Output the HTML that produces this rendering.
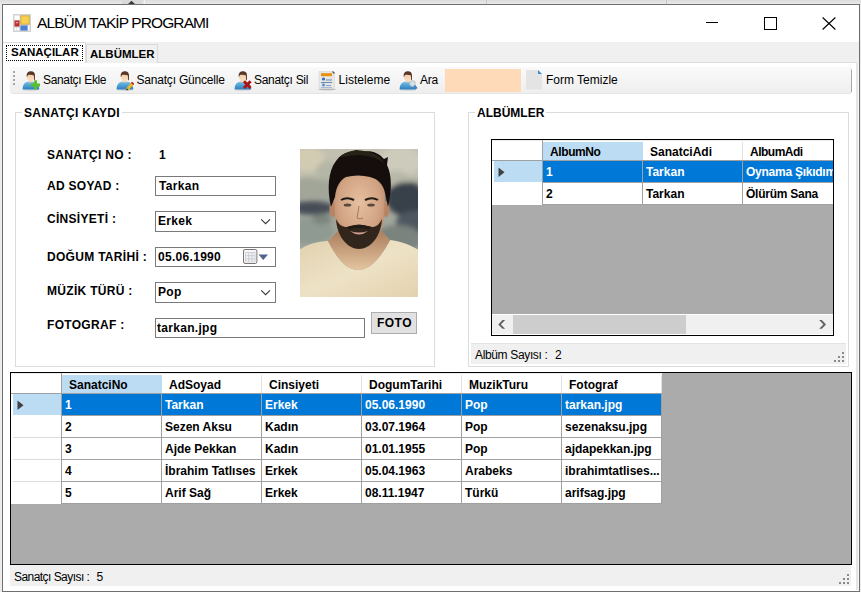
<!DOCTYPE html>
<html><head><meta charset="utf-8">
<style>
*{margin:0;padding:0;box-sizing:border-box}
html,body{width:861px;height:592px;overflow:hidden;background:#ececec;font-family:"Liberation Sans",sans-serif;color:#000}
.a{position:absolute}
#topbg{left:0;top:0;width:861px;height:4px;background:linear-gradient(#dcdcdc,#e9e9e9)}
#win{left:2px;top:4px;width:858px;height:588px;border:1px solid #6f6f6f;background:#fff}
.t{position:absolute;white-space:nowrap;line-height:1}
.b{font-weight:bold}
.tb{position:absolute;background:#fff;border:1px solid #7a7a7a}
.gb{position:absolute;border:1px solid #dcdcdc}
.gbt{position:absolute;background:#fff;padding:0 2px;font-weight:bold;font-size:12px;line-height:1;white-space:nowrap}
.lbl{position:absolute;font-weight:bold;font-size:12px;line-height:1;white-space:nowrap;letter-spacing:0.3px}
.grid{position:absolute;background:#ababab;border:1px solid #000;overflow:hidden}
.row{position:absolute;left:0;height:22px}
.c{position:absolute;top:0;height:22px;border-right:1px solid #a0a0a0;border-bottom:1px solid #a0a0a0;background:#fff;font-weight:bold;font-size:12px;line-height:23px;padding-left:3px;white-space:nowrap;overflow:hidden}
.sel{background:#0078d7;color:#fff}
.hsel{background:#bcdcf4}
.tbt{font-size:12px;letter-spacing:-0.2px;color:#000}
.sst{font-size:12px;letter-spacing:-0.3px;color:#000}
.hc{position:absolute;top:0;height:22px;font-weight:bold;font-size:12px;line-height:22px;padding-top:1px;padding-left:7px;white-space:nowrap;overflow:hidden}
.ss{position:absolute;background:#f0f0f0;font-size:12px;line-height:1}
</style></head><body>
<div class="a" id="topbg"></div>
<div class="a" style="left:122px;top:0;width:20px;height:4px;background:#d9d9d9"></div>
<svg class="a" style="left:127px;top:0" width="9" height="5"><path d="M0.5 4.5L4.5 0.8L8.5 4.5Z" fill="#3a3a3a"/></svg>
<div class="a" style="left:144px;top:0;width:1px;height:4px;background:#f4f4f4"></div>
<div class="a" style="left:486px;top:0;width:1px;height:4px;background:#c8c8c8"></div>
<div class="a" style="left:666px;top:0;width:1px;height:4px;background:#c8c8c8"></div>
<div class="a" id="win"></div>

<!-- title bar -->
<svg class="a" style="left:13px;top:14px" width="18" height="18" viewBox="0 0 18 18">
  <rect x="0" y="0" width="18" height="18" fill="#d2d2d2"/>
  <rect x="1.5" y="1.5" width="5" height="4.5" fill="#fff"/>
  <rect x="1.5" y="6.5" width="5" height="6" fill="#c0302a"/>
  <rect x="2.8" y="8" width="2.4" height="1.3" fill="#f0a0a0"/>
  <rect x="1.5" y="13.5" width="2" height="3" fill="#fff"/>
  <rect x="4.2" y="13.5" width="2" height="3" fill="#fff"/>
  <rect x="7.5" y="1.5" width="9" height="9" fill="#d6a418"/>
  <rect x="8.3" y="2.3" width="7.4" height="7.4" fill="#fad050"/>
  <rect x="7.5" y="11.5" width="7" height="5" fill="#4a7ed8"/>
  <rect x="15" y="11.5" width="1.5" height="5" fill="#fff"/>
</svg>
<div class="t" style="left:37px;top:15px;font-size:15.5px;letter-spacing:-0.9px;color:#000">ALBÜM TAKİP PROGRAMI</div>
<div class="a" style="left:706px;top:22px;width:12px;height:1px;background:#000"></div>
<div class="a" style="left:764px;top:17px;width:13px;height:13px;border:1px solid #000"></div>
<svg class="a" style="left:822px;top:17px" width="14" height="13" viewBox="0 0 14 13"><path d="M0.6 0.5L13.4 12.5M13.4 0.5L0.6 12.5" stroke="#000" stroke-width="1.1"/></svg>

<!-- tab strip -->
<div class="a" style="left:3px;top:42px;width:856px;height:21px;background:#f0f0f0;border-bottom:1px solid #dcdcdc"></div>
<div class="a" style="left:3px;top:42px;width:83px;height:21px;background:#fff;border-top:1px solid #dcdcdc;border-right:1px solid #dcdcdc"></div>
<div class="a" style="left:86px;top:44px;width:72px;height:19px;background:#f0f0f0;border:1px solid #dadada;border-bottom:none"></div>
<div class="a" style="left:6px;top:45px;width:77px;height:16px;border:1px dotted #000"></div>
<div class="t b" style="left:11px;top:47px;font-size:11.5px">SANAÇILAR</div>
<div class="t b" style="left:90px;top:49px;font-size:11.5px">ALBÜMLER</div>


<!-- toolbar -->
<div class="a" style="left:10px;top:67px;width:842px;height:27px;border-radius:3px;background:linear-gradient(#fafafa,#f3f3f3 60%,#eeeeee);border-bottom:1px solid #e6e6e6;border-right:1px solid #e0e0e0"></div>
<div class="a" style="left:13px;top:71px;width:2px;height:2px;background:#a8a8a8"></div>
<div class="a" style="left:13px;top:75px;width:2px;height:2px;background:#a8a8a8"></div>
<div class="a" style="left:13px;top:79px;width:2px;height:2px;background:#a8a8a8"></div>
<div class="a" style="left:13px;top:83px;width:2px;height:2px;background:#a8a8a8"></div>
<svg width="0" height="0" style="position:absolute">
 <defs>
  <linearGradient id="bodyg" x1="0" y1="0" x2="0" y2="1"><stop offset="0" stop-color="#74c0ea"/><stop offset="1" stop-color="#2a7cbc"/></linearGradient>
  <linearGradient id="faceg" x1="0" y1="0" x2="0" y2="1"><stop offset="0" stop-color="#f0c8a0"/><stop offset="1" stop-color="#f8e0c8"/></linearGradient>
  <symbol id="person" viewBox="0 0 18 20">
   <ellipse cx="9" cy="19" rx="8" ry="0.8" fill="#000" opacity="0.12"/>
   <path d="M0.6 18.6C0.6 14.2 2.2 11.2 6.2 10.8H11.2C15.2 11.2 17.2 14.2 17.2 18.6Z" fill="url(#bodyg)"/>
   <rect x="6.6" y="8.8" width="4" height="2.6" fill="#f2d2b2"/>
   <rect x="5.2" y="2.4" width="6.9" height="7.4" rx="2.2" fill="url(#faceg)"/>
   <path d="M4.6 5C4.6 1.6 6.6 0.2 9 0.2C11.4 0.2 13 1.6 13 4.4L12.9 9.2H12.1L11.9 4.6C10.2 3.6 7.2 3.6 5.6 4.2L5.1 6.2Z" fill="#5a3626"/>
  </symbol>
 </defs>
</svg>
<svg class="a" style="left:22px;top:71px" width="18" height="20"><use href="#person"/><path d="M9 14H18M13.6 9.3V18.6" stroke="#5cbf28" stroke-width="2.8"/></svg>
<div class="t tbt" style="left:43px;top:74px;letter-spacing:-0.35px">Sanatçı Ekle</div>
<svg class="a" style="left:116px;top:71px" width="18" height="20"><use href="#person"/><path d="M11 18.5L17 12" stroke="#f0b820" stroke-width="2.8"/><path d="M15.5 11.2L17.8 13.5" stroke="#c81818" stroke-width="1.6"/><path d="M10.5 19.2L11.6 18" stroke="#222" stroke-width="1.2"/></svg>
<div class="t tbt" style="left:136.5px;top:74px">Sanatçı Güncelle</div>
<svg class="a" style="left:234px;top:71px" width="18" height="20"><use href="#person"/><path d="M10 10.2L16.6 17M16.6 10.2L10 17" stroke="#b01414" stroke-width="2.8"/></svg>
<div class="t tbt" style="left:254px;top:74px;letter-spacing:-0.3px">Sanatçı Sil</div>
<svg class="a" style="left:317px;top:71px" width="20" height="20" viewBox="0 0 20 20">
  <ellipse cx="10" cy="18.3" rx="9" ry="0.9" fill="#000" opacity="0.25"/>
  <path d="M2 0.5H15.5L17.5 2.5V17.5H2Z" fill="#e6e6e6" stroke="#d6d6d6" stroke-width="0.6"/>
  <rect x="4" y="2.2" width="11" height="3" fill="#e8920c"/>
  <path d="M15.5 0.5L17.5 2.5" stroke="#555" stroke-width="1.2"/>
  <circle cx="6.5" cy="8" r="1.6" fill="#2c6cb0"/>
  <rect x="9" y="8.5" width="6" height="1" fill="#6a8ab0"/>
  <rect x="4" y="11" width="11" height="1" fill="#6a8ab0"/>
  <circle cx="6.5" cy="14" r="1.4" fill="#4c8cd0"/>
  <rect x="9" y="14" width="5" height="1" fill="#8aa0c0"/>
  <rect x="4" y="16" width="11" height="0.8" fill="#9ab0d0"/>
</svg>
<div class="t tbt" style="left:338.5px;top:74px;letter-spacing:0.05px">Listeleme</div>
<svg class="a" style="left:399px;top:71px" width="20" height="20"><use href="#person" width="18" height="20"/><circle cx="13.5" cy="12.5" r="2.6" fill="#cfe4f4" stroke="#c8c8c8" stroke-width="1.2"/><path d="M15.5 14.5L18 17.5" stroke="#4080c0" stroke-width="1.6"/></svg>
<div class="t tbt" style="left:420px;top:74px">Ara</div>
<div class="a" style="left:445px;top:69px;width:76px;height:23px;background:#ffdab9"></div>
<svg class="a" style="left:526px;top:70px" width="17" height="20" viewBox="0 0 17 20"><path d="M0 0H12L16 4V19.5H0Z" fill="#e4e4e4"/><path d="M12 0L16 4H12Z" fill="#3a90c8"/></svg>
<div class="t tbt" style="left:546px;top:74px;letter-spacing:0px">Form Temizle</div>

<!-- SANATCI KAYDI group -->
<div class="gb" style="left:15px;top:112px;width:420px;height:255px"></div>
<div class="gbt" style="left:22px;top:107px;letter-spacing:0.3px">SANATÇI KAYDI</div>
<div class="lbl" style="left:47px;top:149px">SANATÇI NO :</div>
<div class="lbl" style="left:159px;top:149px">1</div>
<div class="lbl" style="left:47px;top:180px">AD SOYAD :</div>
<div class="tb" style="left:155px;top:176px;width:121px;height:20px"></div>
<div class="lbl" style="left:159px;top:180px">Tarkan</div>
<div class="lbl" style="left:47px;top:213px">CİNSİYETİ :</div>
<div class="tb" style="left:155px;top:211px;width:121px;height:21px"></div>
<div class="lbl" style="left:158px;top:215px">Erkek</div>
<svg class="a" style="left:260px;top:218px" width="12" height="8"><path d="M1.2 1.3L5.6 5.7L10 1.3" fill="none" stroke="#383838" stroke-width="1.1"/></svg>
<div class="lbl" style="left:47px;top:251px">DOĞUM TARİHİ :</div>
<div class="tb" style="left:155px;top:247px;width:121px;height:20px"></div>
<div class="lbl" style="left:158px;top:251px;letter-spacing:0.3px">05.06.1990</div>
<svg class="a" style="left:243px;top:249px" width="15" height="15" viewBox="0 0 15 15">
 <rect x="0.5" y="0.5" width="13.4" height="14" rx="1.6" fill="#f4f6fa" stroke="#6e6666" stroke-width="0.9"/>
 <rect x="2.2" y="3.2" width="10.2" height="10" fill="#c8c8c8"/>
 <rect x="3.0" y="4.0" width="2.3" height="2.3" fill="#eef2fa"/><rect x="3.0" y="7.2" width="2.3" height="2.3" fill="#eef2fa"/><rect x="3.0" y="10.4" width="2.3" height="2.3" fill="#eef2fa"/><rect x="6.2" y="4.0" width="2.3" height="2.3" fill="#eef2fa"/><rect x="6.2" y="7.2" width="2.3" height="2.3" fill="#eef2fa"/><rect x="6.2" y="10.4" width="2.3" height="2.3" fill="#eef2fa"/><rect x="9.4" y="4.0" width="2.3" height="2.3" fill="#eef2fa"/><rect x="9.4" y="7.2" width="2.3" height="2.3" fill="#eef2fa"/><rect x="9.4" y="10.4" width="2.3" height="2.3" fill="#eef2fa"/>
</svg>
<svg class="a" style="left:258px;top:254px" width="11" height="7"><path d="M0.5 0.5H10L5.25 6Z" fill="#4f6290"/></svg>
<div class="lbl" style="left:47px;top:285px">MÜZİK TÜRÜ :</div>
<div class="tb" style="left:155px;top:282px;width:121px;height:21px"></div>
<div class="lbl" style="left:158px;top:286px">Pop</div>
<svg class="a" style="left:260px;top:289px" width="12" height="8"><path d="M1.2 1.3L5.6 5.7L10 1.3" fill="none" stroke="#383838" stroke-width="1.1"/></svg>
<div class="lbl" style="left:47px;top:319px">FOTOGRAF :</div>
<div class="tb" style="left:155px;top:318px;width:210px;height:20px"></div>
<div class="lbl" style="left:157px;top:322px">tarkan.jpg</div>
<div class="a" style="left:371px;top:312px;width:46px;height:22px;background:#e1e1e1;border:1px solid #adadad"></div>
<div class="lbl" style="left:377px;top:317px;letter-spacing:0.45px">FOTO</div>

<!-- photo -->
<svg class="a" style="left:300px;top:149px" width="118" height="148" viewBox="0 0 118 148">
 <defs>
  <filter id="bl" x="-30%" y="-30%" width="160%" height="160%"><feGaussianBlur stdDeviation="2.8"/></filter>
  <filter id="bl2" x="-10%" y="-10%" width="120%" height="120%"><feGaussianBlur stdDeviation="0.7"/></filter>
  <clipPath id="pc"><rect width="118" height="148"/></clipPath>
  <radialGradient id="skin" cx="0.5" cy="0.4" r="0.7"><stop offset="0" stop-color="#e6c0a0"/><stop offset="0.6" stop-color="#d0a282"/><stop offset="1" stop-color="#a87656"/></radialGradient>
  <linearGradient id="shirt" x1="0" y1="0" x2="1" y2="1"><stop offset="0" stop-color="#e0d0ae"/><stop offset="0.5" stop-color="#eee2c6"/><stop offset="1" stop-color="#e2d0ac"/></linearGradient>
  <linearGradient id="neck" x1="0" y1="0" x2="0" y2="1"><stop offset="0" stop-color="#a87a5a"/><stop offset="1" stop-color="#e4c4a0"/></linearGradient>
 </defs>
 <g clip-path="url(#pc)">
 <rect width="118" height="148" fill="#a2a69c"/>
 <g filter="url(#bl)">
  <rect x="-10" y="-10" width="140" height="40" fill="#c2c0b0"/>
  <ellipse cx="8" cy="10" rx="16" ry="12" fill="#d2ccb2"/>
  <ellipse cx="28" cy="22" rx="12" ry="10" fill="#b4b6a6"/>
  <ellipse cx="8" cy="38" rx="18" ry="10" fill="#a2a698"/>
  <ellipse cx="100" cy="12" rx="22" ry="14" fill="#cdcbbc"/>
  <ellipse cx="96" cy="30" rx="14" ry="8" fill="#b8b8a8"/>
  <ellipse cx="106" cy="50" rx="20" ry="17" fill="#383f4a"/>
  <ellipse cx="112" cy="74" rx="16" ry="12" fill="#4e565e"/>
  <ellipse cx="12" cy="59" rx="22" ry="7" fill="#464e57"/>
  <ellipse cx="10" cy="82" rx="24" ry="13" fill="#8e9a92"/>
  <ellipse cx="22" cy="70" rx="10" ry="5" fill="#7a847e"/>
  <ellipse cx="98" cy="90" rx="24" ry="14" fill="#7a837e"/>
 </g>
 <g filter="url(#bl2)">
  <path d="M-5 150V104C4 96 18 92 28 92C38 112 48 121 58 121C70 121 80 110 90 91C100 92 112 96 123 104V150Z" fill="url(#shirt)"/>
  <path d="M28 92C38 112 48 121 58 121C70 121 80 110 90 91L80 80H40Z" fill="url(#neck)"/>
  <ellipse cx="33" cy="60" rx="3.5" ry="8" fill="#b88464"/>
  <ellipse cx="86" cy="60" rx="3.5" ry="8" fill="#b88464"/>
  <path d="M34 42C34 28 44 24 60 24C76 24 85 28 85 42L84 68C82 88 72 99 60 99C48 99 37 88 35 68Z" fill="url(#skin)"/>
  <path d="M36 70C37 88 48 100 59 100C70 100 81 88 82 70C79 76 76 78 72 78C66 76 54 76 47 78C42 78 39 76 36 70Z" fill="#33261e"/>
  <path d="M47 78Q59 73 71 78L69 80.5Q59 77 49 80.5Z" fill="#241a14"/>
  <path d="M50 82Q59 89 68 82Q59 85 50 82Z" fill="#d0a090"/>
  <path d="M31 58C27 40 28 22 36 12C40 6 46 3 52 3L56 1L62 3C70 1 78 3 84 10L88 8L87 16C92 26 92 42 88 58L85 44C83 35 78 30 70 28C62 26 54 26 46 28C40 31 36 38 35 48Z" fill="#151110"/>
  <path d="M40 8C46 2 56 0 64 2C72 3 80 6 84 14C76 8 66 6 58 6C50 6 44 8 40 8Z" fill="#262019"/>
  <path d="M41 51Q47 47.5 54 51M65 51Q72 47.5 78 51" stroke="#221a14" stroke-width="2" fill="none"/>
  <ellipse cx="47.5" cy="56" rx="3.8" ry="1.5" fill="#5a4a3e"/>
  <ellipse cx="71" cy="56" rx="3.8" ry="1.5" fill="#5a4a3e"/>
  <path d="M59 57L57 69Q60 71 63 69" stroke="#a87858" stroke-width="1" fill="none"/>
 </g>
 </g>
</svg>

<!-- ALBUMLER group -->
<div class="gb" style="left:468px;top:112px;width:381px;height:255px"></div>
<div class="gbt" style="left:475px;top:107px">ALBÜMLER</div>
<div class="ss" style="left:471px;top:343px;width:375px;height:21px;border-top:1px solid #e3e3e3"></div>
<div class="t sst" style="left:475px;top:349px;letter-spacing:-0.35px">Albüm Sayısı :</div><div class="t sst" style="left:555px;top:349px">2</div>

<!-- grids -->
<div class="grid" style="left:491px;top:139px;width:343px;height:197px">
<div class="a" style="left:0;top:0;width:351px;height:21px;background:#fff;border-bottom:1px solid #a0a0a0"></div>
<div class="a" style="left:0;top:0;width:351px;height:1px;background:#ececec"></div>
<div class="a" style="left:51px;top:2px;width:100px;height:18px;background:#bcdcf4"></div>
<div class="hc" style="left:51px;top:0;width:100px;height:21px"><span style="letter-spacing:-0.4px">AlbumNo</span></div>
<div class="hc" style="left:151px;top:0;width:100px;height:21px">SanatciAdi</div>
<div class="a" style="left:250px;top:2px;width:1px;height:18px;background:#e3e3e3"></div>
<div class="hc" style="left:251px;top:0;width:100px;height:21px"><span style="letter-spacing:-0.5px">AlbumAdi</span></div>
<div class="a" style="left:350px;top:2px;width:1px;height:18px;background:#e3e3e3"></div>
<div class="a" style="left:0;top:21px;width:50px;height:22px;background:#fff"></div>
<div class="a" style="left:2px;top:21px;width:48px;height:21px;background:#bcdcf4"></div>
<svg class="a" style="left:6px;top:27px" width="8" height="11"><path d="M0.5 0.5L6.5 5.25L0.5 10Z" fill="#404040"/></svg>
<div class="c sel" style="left:51px;top:21px;width:100px;height:22px">1</div>
<div class="c sel" style="left:151px;top:21px;width:100px;height:22px">Tarkan</div>
<div class="c sel" style="left:251px;top:21px;width:100px;height:22px"><span style="letter-spacing:-0.25px">Oynama Şıkıdım</span></div>
<div class="a" style="left:0;top:43px;width:50px;height:22px;background:#fff"></div>
<div class="c" style="left:51px;top:43px;width:100px;height:22px">2</div>
<div class="c" style="left:151px;top:43px;width:100px;height:22px">Tarkan</div>
<div class="c" style="left:251px;top:43px;width:100px;height:22px"><span style="letter-spacing:-0.25px">Ölürüm Sana</span></div>
<div class="a" style="left:50px;top:0;width:1px;height:65px;background:#a0a0a0"></div>
<div class="a" style="left:0;top:174px;width:341px;height:21px;background:#f0f0f0;border-top:1px solid #fff;border-bottom:1px solid #fff"></div>
<div class="a" style="left:21px;top:175px;width:173px;height:19px;background:#cdcdcd"></div>
<svg class="a" style="left:5px;top:179px" width="10" height="12"><path d="M8.1 1.1L5.5 1.1L1.3 5.5L5.5 9.8L8.1 9.8L3.9 5.5Z" fill="#606060"/></svg>
<svg class="a" style="left:326px;top:179px" width="10" height="12"><path d="M1.2 1.1L3.8 1.1L8 5.5L3.8 9.8L1.2 9.8L5.4 5.5Z" fill="#606060"/></svg>
</div>
<div class="grid" style="left:10px;top:372px;width:842px;height:193px">
<div class="a" style="left:0;top:0;width:651px;height:21px;background:#fff;border-bottom:1px solid #a0a0a0"></div>
<div class="a" style="left:0;top:0;width:651px;height:1px;background:#ececec"></div>
<div class="a" style="left:51px;top:2px;width:100px;height:18px;background:#bcdcf4"></div>
<div class="hc" style="left:51px;top:0;width:100px;height:21px">SanatciNo</div>
<div class="hc" style="left:151px;top:0;width:100px;height:21px">AdSoyad</div>
<div class="a" style="left:250px;top:2px;width:1px;height:18px;background:#e3e3e3"></div>
<div class="hc" style="left:251px;top:0;width:100px;height:21px">Cinsiyeti</div>
<div class="a" style="left:350px;top:2px;width:1px;height:18px;background:#e3e3e3"></div>
<div class="hc" style="left:351px;top:0;width:100px;height:21px">DogumTarihi</div>
<div class="a" style="left:450px;top:2px;width:1px;height:18px;background:#e3e3e3"></div>
<div class="hc" style="left:451px;top:0;width:100px;height:21px">MuzikTuru</div>
<div class="a" style="left:550px;top:2px;width:1px;height:18px;background:#e3e3e3"></div>
<div class="hc" style="left:551px;top:0;width:100px;height:21px">Fotograf</div>
<div class="a" style="left:650px;top:2px;width:1px;height:18px;background:#e3e3e3"></div>
<div class="a" style="left:0;top:21px;width:50px;height:22px;background:#fff"></div>
<div class="a" style="left:2px;top:21px;width:48px;height:21px;background:#bcdcf4"></div>
<svg class="a" style="left:6px;top:27px" width="8" height="11"><path d="M0.5 0.5L6.5 5.25L0.5 10Z" fill="#404040"/></svg>
<div class="c sel" style="left:51px;top:21px;width:100px;height:22px">1</div>
<div class="c sel" style="left:151px;top:21px;width:100px;height:22px">Tarkan</div>
<div class="c sel" style="left:251px;top:21px;width:100px;height:22px">Erkek</div>
<div class="c sel" style="left:351px;top:21px;width:100px;height:22px">05.06.1990</div>
<div class="c sel" style="left:451px;top:21px;width:100px;height:22px">Pop</div>
<div class="c sel" style="left:551px;top:21px;width:100px;height:22px">tarkan.jpg</div>
<div class="a" style="left:0;top:43px;width:50px;height:22px;background:#fff"></div>
<div class="a" style="left:2px;top:64px;width:48px;height:1px;background:#dcdcdc"></div>
<div class="c" style="left:51px;top:43px;width:100px;height:22px">2</div>
<div class="c" style="left:151px;top:43px;width:100px;height:22px">Sezen Aksu</div>
<div class="c" style="left:251px;top:43px;width:100px;height:22px">Kadın</div>
<div class="c" style="left:351px;top:43px;width:100px;height:22px">03.07.1964</div>
<div class="c" style="left:451px;top:43px;width:100px;height:22px">Pop</div>
<div class="c" style="left:551px;top:43px;width:100px;height:22px">sezenaksu.jpg</div>
<div class="a" style="left:0;top:65px;width:50px;height:22px;background:#fff"></div>
<div class="a" style="left:2px;top:86px;width:48px;height:1px;background:#dcdcdc"></div>
<div class="c" style="left:51px;top:65px;width:100px;height:22px">3</div>
<div class="c" style="left:151px;top:65px;width:100px;height:22px">Ajde Pekkan</div>
<div class="c" style="left:251px;top:65px;width:100px;height:22px">Kadın</div>
<div class="c" style="left:351px;top:65px;width:100px;height:22px">01.01.1955</div>
<div class="c" style="left:451px;top:65px;width:100px;height:22px">Pop</div>
<div class="c" style="left:551px;top:65px;width:100px;height:22px">ajdapekkan.jpg</div>
<div class="a" style="left:0;top:87px;width:50px;height:22px;background:#fff"></div>
<div class="a" style="left:2px;top:108px;width:48px;height:1px;background:#dcdcdc"></div>
<div class="c" style="left:51px;top:87px;width:100px;height:22px">4</div>
<div class="c" style="left:151px;top:87px;width:100px;height:22px">İbrahim Tatlıses</div>
<div class="c" style="left:251px;top:87px;width:100px;height:22px">Erkek</div>
<div class="c" style="left:351px;top:87px;width:100px;height:22px">05.04.1963</div>
<div class="c" style="left:451px;top:87px;width:100px;height:22px">Arabeks</div>
<div class="c" style="left:551px;top:87px;width:100px;height:22px">ibrahimtatlises...</div>
<div class="a" style="left:0;top:109px;width:50px;height:22px;background:#fff"></div>
<div class="c" style="left:51px;top:109px;width:100px;height:22px">5</div>
<div class="c" style="left:151px;top:109px;width:100px;height:22px">Arif Sağ</div>
<div class="c" style="left:251px;top:109px;width:100px;height:22px">Erkek</div>
<div class="c" style="left:351px;top:109px;width:100px;height:22px">08.11.1947</div>
<div class="c" style="left:451px;top:109px;width:100px;height:22px">Türkü</div>
<div class="c" style="left:551px;top:109px;width:100px;height:22px">arifsag.jpg</div>
<div class="a" style="left:50px;top:0;width:1px;height:131px;background:#a0a0a0"></div>
</div>

<div class="ss" style="left:10px;top:565px;width:841px;height:21px"></div>
<div class="t sst" style="left:14px;top:571px;letter-spacing:-0.55px">Sanatçı Sayısı :</div><div class="t sst" style="left:96.5px;top:571px">5</div>
<svg class="a" style="left:838px;top:573px" width="12" height="12"><g fill="#8a8a8a"><rect x="9" y="1" width="2" height="2"/><rect x="5" y="5" width="2" height="2"/><rect x="9" y="5" width="2" height="2"/><rect x="1" y="9" width="2" height="2"/><rect x="5" y="9" width="2" height="2"/><rect x="9" y="9" width="2" height="2"/></g></svg>
<svg class="a" style="left:833px;top:351px" width="12" height="12"><g fill="#8a8a8a"><rect x="9" y="1" width="2" height="2"/><rect x="5" y="5" width="2" height="2"/><rect x="9" y="5" width="2" height="2"/><rect x="1" y="9" width="2" height="2"/><rect x="5" y="9" width="2" height="2"/><rect x="9" y="9" width="2" height="2"/></g></svg>
<div class="a" style="left:856px;top:62px;width:2px;height:528px;background:#e6e6e6"></div>
<div class="a" style="left:858px;top:62px;width:1px;height:528px;background:#f6f6f6"></div>
<div class="a" style="left:851px;top:70px;width:1px;height:22px;background:#a8a8a8"></div>
</body></html>
